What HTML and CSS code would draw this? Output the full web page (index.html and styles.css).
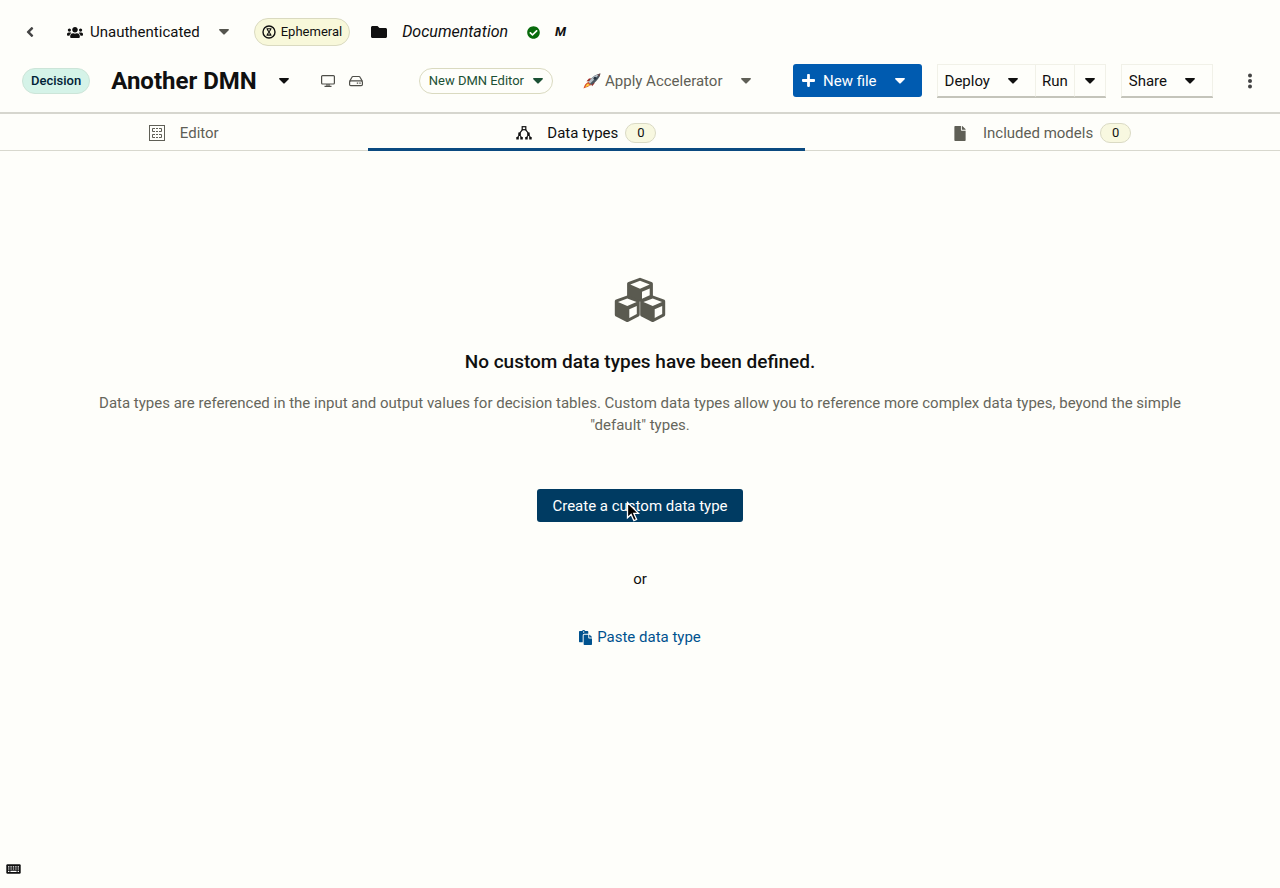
FILE: index.html
```html
<!DOCTYPE html>
<html lang="en">
<head>
<meta charset="utf-8">
<meta name="viewport" content="width=device-width, initial-scale=1">
<title>Another DMN</title>
<link rel="stylesheet" href="styles.css">
</head>
<body>
<svg class="defs" aria-hidden="true">
  <symbol id="caret" viewBox="0 0 10 6"><path d="M.8 0h8.400c.7 0 1 .8.5 1.300L5.700 5.300a1 1 0 0 1-1.400 0L.3 1.300C-.2.8.1 0 .8 0z"/></symbol>
</svg>
<div class="page">
  <header class="header">
    <div class="row context">
      <button class="plain back" aria-label="Back"><svg class="i-back" viewBox="0 0 256 512"><path d="M31.700 239l136-136c9.400-9.400 24.600-9.400 33.900 0l22.600 22.600c9.400 9.400 9.400 24.600 0 33.900L127.900 256l96.400 96.400c9.400 9.400 9.400 24.600 0 33.900L201.700 409c-9.400 9.400-24.600 9.400-33.900 0l-136-136c-9.500-9.400-9.500-24.600-.1-34z"/></svg></button>
      <button class="plain account" aria-haspopup="true">
        <svg class="i-users" viewBox="0 0 640 512"><path d="M96 224c35.300 0 64-28.700 64-64s-28.700-64-64-64-64 28.700-64 64 28.700 64 64 64zm448 0c35.300 0 64-28.700 64-64s-28.700-64-64-64-64 28.700-64 64 28.700 64 64 64zm32 32h-64c-17.600 0-33.500 7.100-45.100 18.600 40.300 22.100 68.900 62 75.100 109.400h66c17.700 0 32-14.300 32-32v-32c0-35.300-28.700-64-64-64zm-256 0c61.900 0 112-50.100 112-112S381.900 32 320 32 208 82.100 208 144s50.100 112 112 112zm76.800 32h-8.300c-20.800 10-43.900 16-68.500 16s-47.600-6-68.500-16h-8.300C179.600 288 128 339.600 128 403.200V432c0 26.500 21.500 48 48 48h288c26.500 0 48-21.500 48-48v-28.800c0-63.600-51.600-115.200-115.200-115.200zm-223.700-13.400C161.500 263.100 145.600 256 128 256H64c-35.300 0-64 28.700-64 64v32c0 17.700 14.300 32 32 32h65.900c6.300-47.400 34.900-87.300 75.200-109.400z"/></svg>
        <span>Unauthenticated</span>
        <svg class="caret muted"><use href="#caret"/></svg>
      </button>
      <span class="pill ephemeral">
        <svg class="i-eph" viewBox="0 0 14 14"><circle cx="7" cy="7" r="6" fill="none" stroke="currentColor" stroke-width="1.400"/><path d="M4.500 3.800h5M4.500 10.200h5M5.200 3.800c0 2 3.600 4.400 3.600 6.400M8.800 3.800c0 2-3.600 4.400-3.600 6.400" fill="none" stroke="currentColor" stroke-width="1.100"/><path d="M6 9.800L7 8.500l1 1.300z"/></svg>
        Ephemeral
      </span>
      <span class="workspace">
        <svg class="i-folder" viewBox="0 64 512 384"><path d="M464 128H272l-64-64H48C21.500 64 0 85.500 0 112v288c0 26.500 21.500 48 48 48h416c26.500 0 48-21.500 48-48V176c0-26.500-21.500-48-48-48z"/></svg>
        <em>Documentation</em>
      </span>
      <svg class="i-ok" viewBox="0 0 512 512" role="img" aria-label="Saved"><path d="M504 256c0 136.967-111.033 248-248 248S8 392.967 8 256 119.033 8 256 8s248 111.033 248 248zM227.314 387.314l184-184c6.248-6.248 6.248-16.379 0-22.627l-22.627-22.627c-6.248-6.249-16.379-6.249-22.628 0L216 308.118l-70.059-70.059c-6.248-6.248-16.379-6.248-22.628 0l-22.627 22.627c-6.248 6.248-6.248 16.379 0 22.627l104 104c6.249 6.249 16.379 6.249 22.628.001z"/></svg>
      <span class="modified">M</span>
    </div>
    <div class="row filebar">
      <span class="pill decision">Decision</span>
      <h1 class="title">Another DMN</h1>
      <button class="plain title-menu" aria-label="Switch file"><svg class="caret"><use href="#caret"/></svg></button>
      <span class="places">
        <svg class="i-desk" viewBox="0 0 14 12" fill="none" stroke="currentColor"><rect x=".6" y=".6" width="12.800" height="8.400" rx="1" stroke-width="1.200"/><path d="M6 9v2M8 9v2M3.500 11.400h7" stroke-width="1.200"/></svg>
        <svg class="i-hdd" viewBox="0 0 14 12" fill="none" stroke="currentColor"><path d="M.7 6.300L2.900 2.200c.2-.4.600-.7 1.100-.7h6c.5 0 .9.300 1.100.7l2.200 4.100" stroke-width="1.200"/><rect x=".6" y="5.800" width="12.800" height="4.800" rx="1.200" stroke-width="1.200"/><path d="M7.800 8.200h1.400M10.300 8.200h1.400" stroke-width="1.300"/></svg>
      </span>
      <button class="pill editor-pick" aria-haspopup="true">New DMN Editor <svg class="caret"><use href="#caret"/></svg></button>
      <button class="plain accelerator" aria-haspopup="true">
        <svg class="i-rocket" viewBox="0 0 18 16"><path d="M3.500 8.200L6 5.600l4.500-.3-3 3.200z" fill="#9c2b24"/><path d="M9 13.300l2.300-2.500.4-4.300-3.600 3.600z" fill="#9c2b24"/><path d="M5.200 9.700C7.500 5.200 12 1.500 17.400.6c-1 5.200-5 9.200-9.700 11.600z" fill="#4b565f"/><path d="M5.700 8.700C8.200 4.800 12.400 1.700 16.900.8L6.700 11z" fill="#b4bec6"/><path d="M14.200 1.600L17.400.6l-.9 3.100z" fill="#6a4a4c"/><circle cx="12" cy="5.200" r="1.500" fill="#25343f"/><path d="M5.200 9l3 3-2 .8C5 14.700 2.500 14.300.5 15.500 1.200 13.700 1.400 11.600 3.700 10z" fill="#d8502b"/><path d="M5 10.400l1.500 1.500c-1 1.200-2.700 1.300-4.200 2.200.6-1.400.9-2.800 2.700-3.700z" fill="#ffd23e"/></svg>
        <span>Apply Accelerator</span>
        <svg class="caret"><use href="#caret"/></svg>
      </button>
      <div class="actions">
        <button class="btn primary new-file" aria-haspopup="true">
          <svg class="i-plus" viewBox="0 32 448 448"><path d="M416 208H272V64c0-17.670-14.330-32-32-32h-32c-17.670 0-32 14.330-32 32v144H32c-17.670 0-32 14.330-32 32v32c0 17.670 14.330 32 32 32h144v144c0 17.670 14.330 32 32 32h32c17.670 0 32-14.330 32-32V304h144c17.670 0 32-14.330 32-32v-32c0-17.670-14.330-32-32-32z"/></svg>
          <span>New file</span>
          <svg class="caret"><use href="#caret"/></svg>
        </button>
        <div class="group">
          <button class="tool" aria-haspopup="true"><span>Deploy</span><svg class="caret"><use href="#caret"/></svg></button>
          <button class="tool run">Run</button>
          <button class="tool run-menu" aria-label="Run options"><svg class="caret"><use href="#caret"/></svg></button>
        </div>
        <div class="group">
          <button class="tool share" aria-haspopup="true"><span>Share</span><svg class="caret"><use href="#caret"/></svg></button>
        </div>
        <button class="plain kebab" aria-label="More actions"><svg class="i-kebab" viewBox="0 0 6 16"><circle cx="3" cy="2.500" r="2"/><circle cx="3" cy="8" r="2"/><circle cx="3" cy="13.500" r="2"/></svg></button>
      </div>
    </div>
  </header>
  <nav class="tabs" role="tablist">
    <button class="tab" role="tab" aria-selected="false">
      <svg class="i-tab" viewBox="0 0 16 16" fill="none" stroke="currentColor"><rect x=".5" y=".5" width="15" height="15"/><path d="M3.500 6.500v-3H6M7 3.500h2M10 3.500h2.500v3H10M9 6.500H7M6 6.500H3.500M3.500 12.500v-3H6M7 9.500h2M10 9.500h2.500v3H10M9 12.500H7M6 12.500H3.500"/></svg>
      <span class="tab-name">Editor</span>
    </button>
    <button class="tab active" role="tab" aria-selected="true">
      <svg class="i-tab" viewBox="0 0 16 16"><g fill="none" stroke="currentColor" stroke-width="1.200"><rect x="6.200" y="1.700" width="3.600" height="3"/><path d="M6.500 4.700L3.700 8.200M9.500 4.700l2.800 3.500M3.300 9.800L1.800 12.300M3.700 9.800l1.600 2.500M12.300 9.800l-1.500 2.500M12.700 9.800l1.600 2.500"/></g><path d="M2.300 7.600h2.500v2.500H2.300zM11.200 7.600h2.500v2.500h-2.500zM.3 12h2.500v2.500H.3zM4.300 12h2.500v2.500H4.300zM9.200 12h2.500v2.500H9.200zM13.200 12h2.500v2.500h-2.500z"/></svg>
      <span class="tab-name">Data types</span><span class="badge">0</span>
    </button>
    <button class="tab" role="tab" aria-selected="false">
      <svg class="i-file" viewBox="0 0 384 512"><path d="M224 136V0H24C10.700 0 0 10.700 0 24v464c0 13.300 10.700 24 24 24h336c13.300 0 24-10.700 24-24V160H248c-13.200 0-24-10.800-24-24zm160-14.100v6.100H256V0h6.100c6.400 0 12.500 2.500 17 7l97.900 98c4.500 4.500 7 10.600 7 16.900z"/></svg>
      <span class="tab-name">Included models</span><span class="badge">0</span>
    </button>
  </nav>
  <main class="empty">
    <svg class="i-cubes" viewBox="0 0 52 46"><path fill-rule="evenodd" d="M26 .8l11.500 4.300c.9.400 1.400 1.100 1.400 2v12.400L26 24.800l-12.900-5.300V7.100c0-.9.500-1.600 1.400-2zM26 3.800L16.300 7.500 26 11.700l9.700-4.200zM28 14.800v7l7.700-3.600v-6.700z"/><path fill-rule="evenodd" d="M13.300 18.500l11 4.100c.9.400 1.400 1.100 1.400 2v13c0 .8-.5 1.600-1.200 2l-10.100 5.200c-.7.400-1.500.4-2.200 0L2 39.600c-.8-.4-1.200-1.200-1.200-2v-13c0-.9.500-1.600 1.400-2zm0 3L4 25.100l9.300 4 9.300-4zM15.300 32.300v8.600l7.500-3.900v-7.900z"/><path fill-rule="evenodd" d="M38.700 18.500l11.100 4.100c.9.400 1.400 1.100 1.400 2v13c0 .8-.5 1.600-1.200 2l-10.200 5.200c-.7.400-1.500.4-2.200 0l-10.200-5.200c-.8-.4-1.200-1.200-1.200-2v-13c0-.9.500-1.600 1.400-2zm0 3l-9.300 3.600 9.300 4 9.300-4zM40.700 32.300v8.600l7.500-3.900v-7.900z"/></svg>
    <h2 class="empty-title">No custom data types have been defined.</h2>
    <p class="empty-text">Data types are referenced in the input and output values for decision tables. Custom data types allow you to reference more complex data types, beyond the simple "default" types.</p>
    <button class="btn create">Create a custom data type
      <svg class="pointer" viewBox="0 0 14 22"><path d="M1.500 1.500v15.200l3.600-3.300 2.800 6.300 2.700-1.200-2.800-6.100h4.700z" fill="#000" stroke="#fff" stroke-width="1.300"/></svg>
    </button>
    <span class="or">or</span>
    <button class="plain paste"><svg class="i-paste" viewBox="0 0 448 512"><path d="M128 184c0-30.879 25.122-56 56-56h136V56c0-13.255-10.745-24-24-24h-80.610C204.306 12.890 183.637 0 160 0s-44.306 12.890-55.390 32H24C10.745 32 0 42.745 0 56v336c0 13.255 10.745 24 24 24h104V184zm32-144c13.255 0 24 10.745 24 24s-10.745 24-24 24-24-10.745-24-24 10.745-24 24-24zm184 248h104v200c0 13.255-10.745 24-24 24H184c-13.255 0-24-10.745-24-24V184c0-13.255 10.745-24 24-24h136v104c0 13.200 10.800 24 24 24zm104-38.059V256h-96v-96h6.059a24 24 0 0 1 16.970 7.029l65.941 65.941a24.002 24.002 0 0 1 7.030 16.971z"/></svg>Paste data type</button>
  </main>
  <footer class="footer">
    <button class="plain" aria-label="Keyboard shortcuts"><svg class="i-keys" viewBox="0 0 15 10"><rect x=".3" y=".3" width="14.400" height="9.400" rx="1.200"/><path d="M2 2.800h11M2 5h11" stroke="#fff" stroke-width="1.200" stroke-dasharray="1.400 1"/><path d="M2 7.400h1.400M4.400 7.400h6.200M11.600 7.400H13" stroke="#fff" stroke-width="1.100"/></svg></button>
  </footer>
</div>
</body>
</html>
```
FILE: styles.css
```css
* { box-sizing: border-box; }

body {
  margin: 0;
  background: #fefefa;
  color: #101010;
  font-family: Roboto, "Liberation Sans", sans-serif;
  font-size: 15px;
  line-height: 22px;
}

svg { display: block; flex: none; fill: currentColor; }
svg[fill="none"] { fill: none; }
.defs { position: absolute; width: 0; height: 0; }

button {
  font: inherit;
  color: inherit;
  background: none;
  border: 0;
  padding: 0;
  cursor: pointer;
  white-space: nowrap;
}

.page { display: flex; flex-direction: column; min-height: 100vh; }

.header {
  display: flex;
  flex-direction: column;
  gap: 18px;
  padding: 18px 15px 15px 22px;
  border-bottom: 2px solid #d6d6ce;
}
.row { display: flex; align-items: center; white-space: nowrap; }
.context { height: 28px; }
.filebar { height: 33px; }
.plain { display: flex; align-items: center; }
.caret { width: 10px; height: 6px; }
.muted { color: #55554e; }

.back { width: 16px; justify-content: center; color: #444; }
.i-back { width: 8px; height: 16px; }
.account { gap: 7px; margin-left: 29px; }
.account .caret { margin-left: 12px; }
.i-users { width: 16px; height: 13px; }

.pill {
  display: flex;
  align-items: center;
  border: 1px solid #dadac0;
  border-radius: 14px;
  font-size: 13px;
}
.ephemeral { gap: 5px; height: 28px; margin-left: 25px; padding: 0 7px; background: #f8f8da; }
.i-eph { width: 14px; height: 14px; }
.workspace { display: flex; align-items: center; gap: 15px; margin-left: 21px; font-size: 16px; }
.i-folder { width: 16px; height: 12px; }
.i-ok { width: 13px; height: 13px; margin-left: 19px; color: #086b0c; }
.modified { margin-left: 15px; font-size: 13px; font-weight: 700; font-style: italic; }

.decision {
  height: 26px;
  padding: 0 8px;
  background: #d5f3e8;
  border-color: #cce5d8;
  color: #002136;
  font-weight: 500;
}
.title { margin: 0 0 0 21px; font-size: 24px; font-weight: 700; line-height: 32px; }
.title-menu { margin-left: 22px; }
.places { display: flex; gap: 14px; margin-left: 32px; color: #4e4e48; }
.i-desk, .i-hdd { width: 14px; height: 12px; }
.editor-pick { gap: 9px; height: 26px; margin-left: 56px; padding: 0 9px; color: #1b5034; }
.accelerator { gap: 4px; margin-left: 30px; color: #5f5f56; }
.accelerator .caret { margin-left: 14px; }
.i-rocket { width: 18px; height: 16px; }

.actions { display: flex; align-items: center; margin-left: auto; }
.btn { display: flex; align-items: center; height: 33px; border-radius: 3px; color: #fff; }
.primary { background: #005bb0; }
.new-file { gap: 8px; padding: 0 17px 0 9px; }
.new-file .caret { margin-left: 10px; }
.i-plus { width: 13px; height: 13px; }
.group { display: flex; margin-left: 15px; box-shadow: 0 1px 0 #c4c4ba; }
.tool {
  display: flex;
  align-items: center;
  gap: 18px;
  height: 33px;
  padding: 0 17px 0 7px;
  border: 1px solid #f1f1e8;
  border-bottom-color: #c4c4ba;
  border-left-width: 0;
}
.tool:first-child { border-left-width: 1px; }
.run { padding: 0 6px; }
.run-menu { padding: 0 10px; }
.kebab { width: 30px; margin-left: 22px; justify-content: center; color: #444; }
.i-kebab { width: 6px; height: 16px; }

.tabs { display: flex; height: 37px; }
.tab {
  display: flex;
  flex: 1 1 auto;
  align-items: center;
  justify-content: center;
  padding-top: 2px;
  border-bottom: 1px solid #d8d8ce;
  color: #5f5f56;
}
.active { padding-top: 4px; border-bottom: 3px solid #0b4a80; color: #101010; }
.i-tab { width: 16px; height: 16px; }
.i-file { width: 12px; height: 15px; margin-right: 2px; }
.tab-name { margin-left: 15px; }
.badge {
  min-width: 31px;
  margin-left: 7px;
  border: 1px solid #dadac4;
  border-radius: 10px;
  background: #f8f8e0;
  color: #101010;
  font-size: 13px;
  line-height: 18px;
}

.empty {
  display: flex;
  flex: 1;
  flex-direction: column;
  align-items: center;
  padding: 126px 90px 0;
}
.i-cubes { width: 52px; height: 46px; color: #5a5a50; }
.empty-title { margin: 25px 0 0; font-size: 19px; font-weight: 500; line-height: 28px; }
.empty-text { margin: 16px 0 0; color: #66665c; text-align: center; }
.create { position: relative; margin-top: 53px; padding: 0 15px; background: #003b62; }
.pointer { position: absolute; left: 89px; top: 12px; width: 14px; height: 22px; }
.or { margin-top: 46px; }
.paste { gap: 5px; margin-top: 36px; color: #00528f; }
.i-paste { width: 13px; height: 15px; }

.footer { padding: 0 6px 14px; }
.i-keys { width: 15px; height: 10px; }
```
